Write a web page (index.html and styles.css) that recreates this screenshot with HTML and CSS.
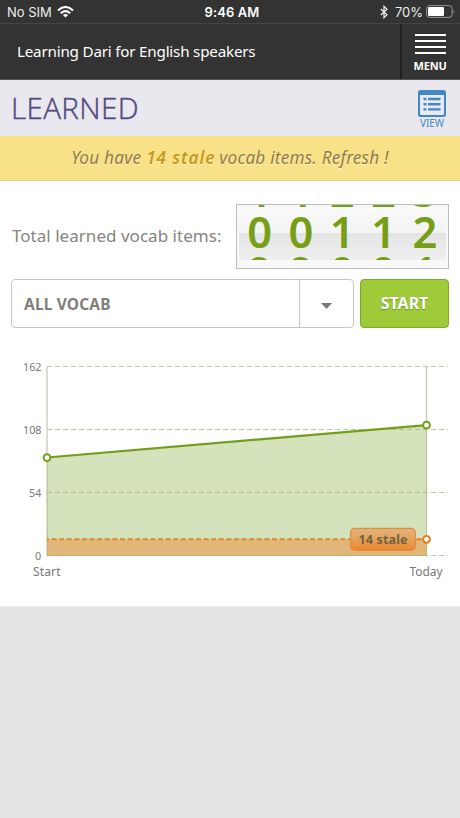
FILE: index.html
```html
<!DOCTYPE html>
<html lang="en">
<head>
<meta charset="utf-8">
<title>Learned</title>
<link rel="stylesheet" href="styles.css">
</head>
<body>
<div class="status">
  <div class="carrier"><span>No SIM</span>
    <svg width="17" height="12" viewBox="0 0 17 12" fill="none" stroke="#fff" stroke-width="2"><path d="M1 4.400Q8.500-2.400 16 4.400M3.700 7.200Q8.500 3 13.300 7.200"/><path d="M8.500 11.500L5.900 8.900Q8.500 6.900 11.100 8.900Z" fill="#fff" stroke="none"/></svg>
  </div>
  <span class="time">9:46 AM</span>
  <div class="power">
    <svg width="8" height="14" viewBox="0 0 8 14" fill="none" stroke="#eee" stroke-width="1.200"><path d="M.8 4L7 9.800L4 12.700V1.300L7 4.200L.8 10"/></svg>
    <span class="percent">70%</span>
    <svg width="29" height="13" viewBox="0 0 29 13"><rect x=".6" y=".6" width="25.500" height="11.800" rx="3" fill="none" stroke="#999"/><rect x="2" y="2" width="16" height="9" rx="1.200" fill="#fff"/><path d="M27.500 4.500q1.500 2 0 4z" fill="#999"/></svg>
  </div>
</div>
<header class="bar">
  <span class="course">Learning Dari for English speakers</span>
  <div class="menu"><i></i><i></i><i></i><i></i><b>MENU</b></div>
</header>
<section class="heading">
  <h1>LEARNED</h1>
  <div class="view">
    <svg width="28" height="27" viewBox="0 0 28 27"><path fill="#4188c5" fill-rule="evenodd" d="M2.500 0h23A2.500 2.500 0 0 1 28 2.500v22a2.500 2.500 0 0 1-2.500 2.500h-23A2.500 2.500 0 0 1 0 24.500v-22A2.500 2.500 0 0 1 2.500 0zM2 5v18.800q0 1.200 1.200 1.200h21.600q1.200 0 1.200-1.200V5z"/><path d="M5.500 9H8.500M5.500 14.200H8.500M5.500 19.400H8.500M10 9H22.500M10 14.200H22.500M10 19.400H22.500" stroke="#4188c5" stroke-width="2.400"/></svg>
    <span>VIEW</span>
  </div>
</section>
<div class="notice"><span>You have</span><b>14 stale</b><span>vocab items. Refresh !</span></div>
<main>
  <div class="total">
    <span class="total-label">Total learned vocab items:</span>
    <div class="counter"><div class="reels">
      <div class="reel"><span>1</span><span>0</span><span>9</span></div>
      <div class="reel"><span>1</span><span>0</span><span>9</span></div>
      <div class="reel"><span>2</span><span>1</span><span>0</span></div>
      <div class="reel"><span>2</span><span>1</span><span>0</span></div>
      <div class="reel"><span>3</span><span>2</span><span>1</span></div>
    </div></div>
  </div>
  <div class="controls">
    <div class="select"><span>ALL VOCAB</span><div class="arrow"><svg width="11" height="6" viewBox="0 0 11 6"><path d="M0 0h11L5.500 6z" fill="#777"/></svg></div></div>
    <div class="start">START</div>
  </div>
  <svg class="chart" width="460" height="250" viewBox="0 350 460 250">
    <g stroke="#c8c6b0" stroke-width="1.200">
      <path d="M47 366.500H448M47 429.500H448M47 492.500H448M47 555.500H448" stroke-dasharray="5 3"/>
      <path d="M47 367V556M426.500 367V556"/>
    </g>
    <path d="M47 457.500L426.500 425.200V555.500H47z" fill="#80ae3b" fill-opacity=".34"/>
    <path d="M47 539.300H426.500V555.500H47z" fill="#ed8b35" fill-opacity=".5"/>
    <path d="M47 555.500H426.500" stroke="#c9aa79"/>
    <path d="M47 457.500L426.500 425.200" stroke="#739f18" stroke-width="2.200"/>
    <path d="M47 539.300H426.500" stroke="#e1842a" stroke-width="2" stroke-dasharray="5 2.600" stroke-dashoffset="3"/>
    <g fill="#fff" stroke-width="2"><circle cx="47" cy="457.700" r="3.400" stroke="#739f18"/><circle cx="426.500" cy="425.200" r="3.400" stroke="#739f18"/><circle cx="426.500" cy="539.300" r="3.400" stroke="#e67c20"/></g>
    <defs><linearGradient id="tag" x2="0" y2="1"><stop stop-color="#dfb47b"/><stop offset=".45" stop-color="#e5a45f"/><stop offset="1" stop-color="#ee8528"/></linearGradient></defs>
    <rect x="350.500" y="528.300" width="65" height="22" rx="4.500" fill="url(#tag)" stroke="#df8d3b" stroke-width="1.200"/>
    <text class="stale" x="358.500" y="544" textLength="49">14 stale</text>
    <g class="axis"><text x="23" y="371.200" textLength="18.500">162</text><text x="23" y="434.200" textLength="18.500">108</text><text x="29" y="497.200" textLength="12.500">54</text><text x="35" y="560">0</text></g>
    <g class="axis days"><text x="33" y="576" textLength="27.500">Start</text><text x="409.500" y="576" textLength="33">Today</text></g>
  </svg>
</main>
</body>
</html>
```
FILE: styles.css
```css
* { box-sizing: border-box; }
body { margin: 0; width: 460px; height: 818px; overflow: hidden; background: #e5e4e2; font-family: "Noto Sans", sans-serif; }
svg { display: block; flex: none; }
span, b, h1 { white-space: nowrap; }
.status { height: 24px; background: #333; color: #eee; display: grid; grid-template-columns: 1fr auto 1fr; align-items: center; padding: 0 5px 0 7px; border-bottom: 1px solid #444; font: 13px Inter, sans-serif; }
.carrier { display: flex; align-items: center; gap: 5px; }
.time { font-weight: 600; letter-spacing: .1px; color: #fff; padding-left: 2px; }
.power { display: flex; justify-content: flex-end; align-items: center; }
.percent { margin: 0 3px 0 7px; }
.bar { height: 56px; background: #333; color: #fff; display: flex; border-bottom: 1px solid #555; }
.course { flex: 1; padding-left: 17px; line-height: 55px; font-size: 15.200px; letter-spacing: -.2px; }
.menu { width: 60px; border-left: 2px solid #202020; padding-top: 10px; display: flex; flex-direction: column; align-items: center; gap: 4px; }
.menu i { width: 31px; height: 2px; background: #fff; margin-right: 2px; }
.menu b { font-size: 11px; line-height: 14px; margin: 1px 2px 0 0; letter-spacing: -.2px; }
.heading { height: 56px; background: #e9e8ef; display: flex; justify-content: space-between; padding: 0 14px 0 11px; }
h1 { margin: 0; font: 300 29.500px/56px "Open Sans", sans-serif; color: #544982; letter-spacing: .4px; -webkit-text-stroke: .45px #544982; }
.view { display: flex; flex-direction: column; align-items: center; padding-top: 10px; color: #4188c5; width: 28px; }
.view span { font-size: 10px; line-height: 13px; }
.notice { height: 45px; background: #f9e187; border-bottom: 1px solid #e5cd7c; display: flex; justify-content: center; font-size: 17.200px; letter-spacing: .2px; line-height: 43px; font-style: italic; color: #927b4b; text-shadow: 0 1px 0 #fff4c5; }
.notice b { color: #c9981a; font-weight: 600; letter-spacing: .9px; margin: 0 4px 0 5px; }
main { height: 426px; background: #fff; padding-top: 22px; border-bottom: 1px solid #e8e8e8; }
.total { height: 66px; display: flex; align-items: center; justify-content: space-between; padding: 0 11px 0 12px; }
.total-label { font-size: 17px; color: #85857f; letter-spacing: .03px; margin-top: -2px; }
.counter { width: 213px; height: 65px; border: 1px solid #bdbdbd; padding: 0 2px 8px; background: #f8f8f8; }
.reels { display: flex; height: 55px; overflow: hidden; background: linear-gradient(#f9f9f9, #f4f4f4 50%, #e4e4e4 51%, #efefef); }
.reel { width: 41.300px; flex: none; font-size: 43.500px; font-weight: 600; color: #779f16; text-align: center; margin-top: -44.500px; }
.reel span { display: block; height: 40.500px; line-height: 61px; }
.controls { display: flex; gap: 6px; margin: 10px 11px 0; height: 50px; }
.select { width: 343px; height: 49px; border: 1px solid #c5c5c5; border-radius: 4px; display: flex; justify-content: space-between; align-items: center; padding-left: 12px; font-size: 15.500px; letter-spacing: .15px; font-weight: 700; color: #7f7f79; }
.arrow { width: 54px; height: 47px; border-left: 1px solid #c5c5c5; display: flex; align-items: center; justify-content: center; padding-top: 4px; }
.start { width: 89px; height: 49px; border: 1px solid #7eaa29; border-radius: 4px; background: #9fcb3b; color: #fff; font-size: 16px; font-weight: 700; line-height: 47px; text-align: center; text-shadow: 0 1px 1px #6f9328; }
.chart { margin-top: 21px; }
.axis { font-size: 10.800px; fill: #777; }
.days { font-size: 12px; }
.stale { font-size: 12.500px; font-weight: 700; fill: #735f41; }
```
